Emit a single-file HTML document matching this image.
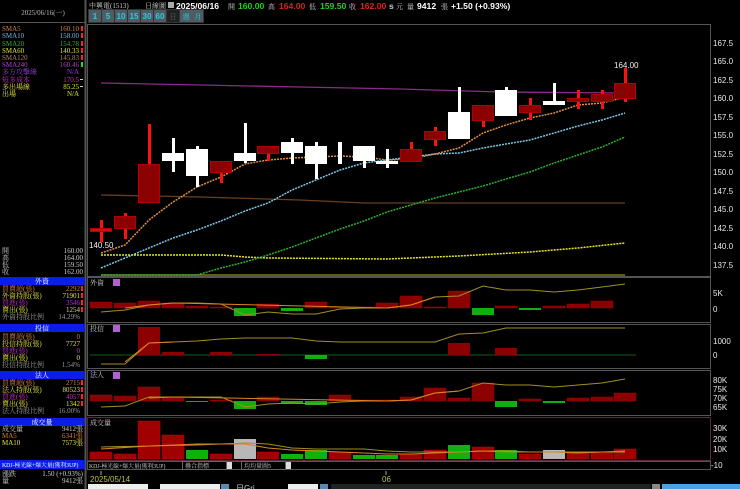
<!DOCTYPE html>
<html><head><meta charset="utf-8">
<style>
html,body{margin:0;padding:0;background:#000;width:740px;height:489px;overflow:hidden}
svg{display:block}
text{font-family:"Liberation Sans","Noto Sans CJK TC",sans-serif;font-size:8px}
.s,.s text{font-family:"Liberation Serif","Noto Serif CJK SC",serif;font-size:7px}
.ax text{fill:#e8e8e8;font-size:8px;font-family:"Liberation Sans",sans-serif}
.h{font-size:8.6px;font-weight:bold}
</style></head><body>
<svg width="740" height="489" viewBox="0 0 740 489" xmlns="http://www.w3.org/2000/svg">
<rect width="740" height="489" fill="#000"/>
<line x1="85.5" y1="0" x2="85.5" y2="489" stroke="#555" stroke-width="2"/>
<line x1="0" y1="22.5" x2="85" y2="22.5" stroke="#555"/>
<text x="43" y="15" fill="#bbb" text-anchor="middle" class="s">2025/06/16(一)</text>
<g class="s">
<text x="2" y="31" fill="#d08040">SMA5</text><text x="79" y="31" fill="#d08040" text-anchor="end">160.10</text>
<text x="2" y="38" fill="#70b8e0">SMA10</text><text x="79" y="38" fill="#70b8e0" text-anchor="end">158.00</text>
<text x="2" y="46" fill="#30b030">SMA20</text><text x="79" y="46" fill="#30b030" text-anchor="end">154.78</text>
<text x="2" y="53" fill="#e0e040">SMA60</text><text x="79" y="53" fill="#e0e040" text-anchor="end">140.33</text>
<text x="2" y="60" fill="#b08060">SMA120</text><text x="79" y="60" fill="#b08060" text-anchor="end">145.83</text>
<text x="2" y="67" fill="#b040c0">SMA240</text><text x="79" y="67" fill="#b040c0" text-anchor="end">160.46</text>
<text x="2" y="74" fill="#9040d0">多方攻擊線</text><text x="79" y="74" fill="#9040d0" text-anchor="end">N/A</text>
<text x="2" y="82" fill="#c030c0">短多成本</text><text x="79" y="82" fill="#c030c0" text-anchor="end">170.5</text>
<text x="2" y="89" fill="#e0e040">多出場線</text><text x="79" y="89" fill="#e0e040" text-anchor="end">85.25</text>
<text x="2" y="96" fill="#e0e040">出場</text><text x="79" y="96" fill="#e0e040" text-anchor="end">N/A</text>
</g>
<g fill="#ff2020"><rect x="81" y="26" width="2" height="5"/><rect x="81" y="33" width="2" height="5"/><rect x="81" y="41" width="2" height="5"/><rect x="81" y="48" width="2" height="5"/><rect x="81" y="55" width="2" height="5"/></g>
<rect x="81" y="62" width="2" height="5" fill="#20e020"/>
<g fill="#ccc"><rect x="80" y="79" width="3" height="1"/><rect x="80" y="86" width="3" height="1"/></g>

<g class="s" fill="#ccc">
<text x="2" y="253">開</text><text x="83" y="253" text-anchor="end">160.00</text>
<text x="2" y="260">高</text><text x="83" y="260" text-anchor="end">164.00</text>
<text x="2" y="267">低</text><text x="83" y="267" text-anchor="end">159.50</text>
<text x="2" y="274">收</text><text x="83" y="274" text-anchor="end">162.00</text>
</g>
<g fill="#0a1ee8"><rect x="0" y="277" width="85" height="8"/><rect x="0" y="324" width="85" height="8"/><rect x="0" y="371" width="85" height="8"/><rect x="0" y="418" width="85" height="8"/><rect x="0" y="460" width="85" height="9"/></g>
<g class="s" fill="#fff" text-anchor="middle"><text x="42" y="283.5">外資</text><text x="42" y="330.5">投信</text><text x="42" y="377.5">法人</text><text x="42" y="424.5">成交量</text></g>
<text x="2" y="467" class="s" fill="#fff" style="font-size:5.8px">KDJ-極光線+爆大量(獲利3UP)</text>
<g class="s">
<text x="2" y="291" fill="#d08040">買賣超(張)</text><text x="80" y="291" fill="#d08040" text-anchor="end">2292</text>
<text x="2" y="298" fill="#e0e040">外資持股(張)</text><text x="80" y="298" fill="#e0e040" text-anchor="end">71901</text>
<text x="2" y="305" fill="#c030c0">買進(張)</text><text x="80" y="305" fill="#c030c0" text-anchor="end">3546</text>
<text x="2" y="312" fill="#e0e040">賣出(張)</text><text x="80" y="312" fill="#e0e040" text-anchor="end">1254</text>
<text x="2" y="319" fill="#999">外資持股比例</text><text x="80" y="319" fill="#999" text-anchor="end">14.29%</text>
<text x="2" y="339" fill="#d08040">買賣超(張)</text><text x="80" y="339" fill="#d08040" text-anchor="end">0</text>
<text x="2" y="346" fill="#e0e040">投信持股(張)</text><text x="80" y="346" fill="#e0e040" text-anchor="end">7727</text>
<text x="2" y="353" fill="#c030c0">買進(張)</text><text x="80" y="353" fill="#c030c0" text-anchor="end">0</text>
<text x="2" y="360" fill="#e0e040">賣出(張)</text><text x="80" y="360" fill="#e0e040" text-anchor="end">0</text>
<text x="2" y="367" fill="#999">投信持股比例</text><text x="80" y="367" fill="#999" text-anchor="end">1.54%</text>
<text x="2" y="385" fill="#d08040">買賣超(張)</text><text x="80" y="385" fill="#d08040" text-anchor="end">2715</text>
<text x="2" y="392" fill="#e0e040">法人持股(張)</text><text x="80" y="392" fill="#e0e040" text-anchor="end">80523</text>
<text x="2" y="399" fill="#c030c0">買進(張)</text><text x="80" y="399" fill="#c030c0" text-anchor="end">4057</text>
<text x="2" y="406" fill="#e0e040">賣出(張)</text><text x="80" y="406" fill="#e0e040" text-anchor="end">1342</text>
<text x="2" y="413" fill="#999">法人持股比例</text><text x="80" y="413" fill="#999" text-anchor="end">16.00%</text>
<text x="2" y="431" fill="#ccc">成交量</text><text x="83" y="431" fill="#ccc" text-anchor="end">9412張</text>
<text x="2" y="438" fill="#d08040">MA5</text><text x="83" y="438" fill="#d08040" text-anchor="end">6341張</text>
<text x="2" y="445" fill="#e0e040">MA10</text><text x="83" y="445" fill="#e0e040" text-anchor="end">7573張</text>
<text x="2" y="476" fill="#ccc">漲跌</text><text x="83" y="476" fill="#ccc" text-anchor="end">1.50 (+0.93%)</text>
<text x="2" y="483" fill="#ccc">量</text><text x="83" y="483" fill="#ccc" text-anchor="end">9412張</text>
</g>
<g fill="#ff2020"><rect x="81" y="286" width="2" height="5"/><rect x="81" y="293" width="2" height="5"/><rect x="81" y="300" width="2" height="5"/><rect x="81" y="307" width="2" height="5"/><rect x="81" y="380" width="2" height="5"/><rect x="81" y="387" width="2" height="5"/><rect x="81" y="394" width="2" height="5"/><rect x="81" y="401" width="2" height="5"/></g>

<text x="89" y="8" class="s" fill="#ccc">中興電(1513)</text>
<text x="145" y="8" class="s" fill="#ccc">日線圖</text>
<rect x="168" y="2" width="6" height="6" fill="#aaa"/>
<text x="176" y="9" fill="#fff" class="h">2025/06/16</text>
<text x="228" y="9" class="s" fill="#ccc">開</text><text x="238" y="9" fill="#20d020" class="h">160.00</text>
<text x="268" y="9" class="s" fill="#ccc">高</text><text x="279" y="9" fill="#e02020" class="h">164.00</text>
<text x="309" y="9" class="s" fill="#ccc">低</text><text x="320" y="9" fill="#20d020" class="h">159.50</text>
<text x="349" y="9" class="s" fill="#ccc">收</text><text x="360" y="9" fill="#e02020" class="h">162.00</text>
<text x="389" y="9" fill="#ccc" class="h">s</text><text x="396" y="9" class="s" fill="#ccc">元</text>
<text x="407" y="9" class="s" fill="#ccc">量</text><text x="417" y="9" fill="#fff" class="h">9412</text><text x="441" y="9" class="s" fill="#ccc">張</text>
<text x="451" y="9" fill="#fff" class="h">+1.50 (+0.93%)</text>

<rect x="88" y="9" width="116" height="14" fill="#333"/>
<g fill="#4e5d63">
<rect x="89" y="10" width="12" height="12"/><rect x="102" y="10" width="12" height="12"/><rect x="115" y="10" width="12" height="12"/><rect x="128" y="10" width="12" height="12"/><rect x="141" y="10" width="12" height="12"/><rect x="154" y="10" width="12" height="12"/><rect x="180" y="10" width="12" height="12"/><rect x="192" y="10" width="11" height="12"/></g>
<rect x="167" y="10" width="12" height="12" fill="#222"/>
<g fill="#30c8e0" font-weight="bold" text-anchor="middle">
<text x="95" y="19">1</text><text x="108" y="19">5</text><text x="121" y="19">10</text><text x="134" y="19">15</text><text x="147" y="19">30</text><text x="160" y="19">60</text></g>
<g class="s" text-anchor="middle"><text x="173" y="19" fill="#666">日</text><text x="186" y="19" fill="#30c8e0">週</text><text x="198" y="19" fill="#30c8e0">月</text></g>

<rect x="87.5" y="24.5" width="623" height="252" fill="none" stroke="#555"/>
<g class="ax">
<text x="713" y="46">167.5</text><text x="713" y="64">165.0</text><text x="713" y="83">162.5</text><text x="713" y="101">160.0</text><text x="713" y="120">157.5</text><text x="713" y="138">155.0</text><text x="713" y="157">152.5</text><text x="713" y="175">150.0</text><text x="713" y="194">147.5</text><text x="713" y="212">145.0</text><text x="713" y="231">142.5</text><text x="713" y="249">140.0</text><text x="713" y="268">137.5</text>
</g>
<g fill="none">
<polyline points="101,83 200,85 300,87 400,89 500,92 625,93" stroke="#8a2a8a" stroke-width="1.3"/>
<polyline points="101,195 200,197 300,200 364,203 625,203" stroke="#6a4020" stroke-width="1.3"/>
<polyline points="101,275 625,275" stroke="#807a20" stroke-width="1.5"/>
<polyline points="101,255 221,255 245,257 268,258 387,259 459,256 530,252 578,248 625,243" stroke="#e8e820" stroke-width="1.5" stroke-dasharray="2,1"/>
<polyline points="101,275 197,275 221,268 245,262 268,255 292,247 316,238 340,229 364,221 387,212 411,205 435,198 459,192 483,186 506,179 530,172 554,163 578,155 602,147 625,137" stroke="#30b030" stroke-width="1.5" stroke-dasharray="2,1"/>
<polyline points="101,268 125,258 149,248 173,238 197,230 221,221 245,211 268,203 292,190 316,180 340,170 364,163 387,160 411,157 435,154 459,153 483,148 506,144 530,140 554,133 578,126 602,120 625,113" stroke="#80c8e8" stroke-width="1.5" stroke-dasharray="2,1"/>
<polyline points="101,253 125,245 149,220 173,202 197,187 221,177 245,164 268,160 292,158 316,157 340,156 364,157 387,160 411,159 435,154 459,148 483,133 506,125 530,118 554,113 578,105 602,103 625,97" stroke="#e09040" stroke-width="1.5" stroke-dasharray="2,1"/>
</g>
<g fill="#ff1010">
<rect x="100" y="220" width="3" height="22"/><rect x="124" y="213" width="3" height="26"/><rect x="148" y="124" width="3" height="78"/><rect x="220" y="161" width="3" height="22"/><rect x="267" y="146" width="3" height="15"/><rect x="410" y="142" width="3" height="19"/><rect x="434" y="127" width="3" height="19"/><rect x="482" y="105" width="3" height="22"/><rect x="529" y="98" width="3" height="22"/><rect x="577" y="90" width="3" height="19"/><rect x="601" y="90" width="3" height="19"/><rect x="624" y="68" width="3" height="34"/>
</g>
<g fill="#8b0000" stroke="#b00000" stroke-width="1">
<rect x="90.5" y="228.5" width="21" height="3" fill="#d01010"/>
<rect x="114.5" y="216.5" width="21" height="12"/>
<rect x="138.5" y="164.5" width="21" height="38"/>
<rect x="210.5" y="161.5" width="21" height="11"/>
<rect x="257.5" y="146.5" width="21" height="7"/>
<rect x="400.5" y="149.5" width="21" height="12"/>
<rect x="424.5" y="131.5" width="21" height="8"/>
<rect x="472.5" y="105.5" width="21" height="15"/>
<rect x="519.5" y="105.5" width="21" height="7"/>
<rect x="567.5" y="98.5" width="21" height="3"/>
<rect x="591.5" y="94.5" width="21" height="7"/>
<rect x="614.5" y="83.5" width="21" height="15"/>
</g>
<g fill="#fff">
<rect x="172" y="138" width="3" height="34"/><rect x="162" y="153" width="22" height="8"/>
<rect x="196" y="146" width="3" height="41"/><rect x="186" y="149" width="22" height="27"/>
<rect x="244" y="123" width="3" height="40"/><rect x="234" y="153" width="22" height="8"/>
<rect x="291" y="138" width="3" height="26"/><rect x="281" y="142" width="22" height="11"/>
<rect x="315" y="142" width="3" height="37"/><rect x="305" y="146" width="22" height="18"/>
<rect x="338" y="142" width="4" height="22"/>
<rect x="363" y="146" width="3" height="22"/><rect x="353" y="146" width="22" height="15"/>
<rect x="386" y="149" width="3" height="19"/><rect x="376" y="161" width="22" height="3"/>
<rect x="458" y="87" width="3" height="52"/><rect x="448" y="112" width="22" height="27"/>
<rect x="505" y="87" width="3" height="29"/><rect x="495" y="90" width="22" height="26"/>
<rect x="553" y="83" width="3" height="22"/><rect x="543" y="101" width="22" height="4"/>
</g>
<text x="614" y="68" fill="#eee">164.00</text>
<text x="89" y="248" fill="#eee">140.50</text>

<g fill="none" stroke="#555">
<rect x="87.5" y="277.5" width="623" height="45"/>
<rect x="87.5" y="324.5" width="623" height="44"/>
<rect x="87.5" y="370.5" width="623" height="45"/>
<rect x="87.5" y="417.5" width="623" height="43" stroke="#5a2a3a"/>
<rect x="87.5" y="461.5" width="623" height="8"/>
</g>
<g class="s" fill="#ccc"><text x="90" y="285">外資</text><text x="90" y="331">投信</text><text x="90" y="377">法人</text><text x="90" y="425">成交量</text></g>
<g fill="#b060d0"><rect x="113" y="279" width="7" height="7"/><rect x="113" y="325" width="7" height="7"/><rect x="113" y="372" width="7" height="7"/></g>
<g class="ax"><text x="713" y="296">5K</text><text x="713" y="312">0</text><text x="713" y="344">1000</text><text x="713" y="358">0</text><text x="713" y="383">80K</text><text x="713" y="392">75K</text><text x="713" y="401">70K</text><text x="713" y="410">65K</text><text x="713" y="431">30K</text><text x="713" y="442">20K</text><text x="713" y="452">10K</text><text x="711" y="468">-10</text></g>

<g fill="#8b0000" stroke="#a00000" stroke-width="0.5">
<rect x="90" y="302" width="22" height="6"/><rect x="114" y="303" width="22" height="5"/><rect x="138" y="301" width="22" height="7"/><rect x="162" y="303" width="22" height="5"/><rect x="186" y="306" width="22" height="2"/><rect x="210" y="307" width="22" height="1"/><rect x="257" y="304" width="22" height="4"/><rect x="305" y="302" width="22" height="6"/><rect x="329" y="307" width="22" height="1"/><rect x="353" y="307" width="22" height="1"/><rect x="376" y="303" width="22" height="5"/><rect x="400" y="296" width="22" height="12"/><rect x="424" y="307" width="22" height="1"/><rect x="448" y="291" width="22" height="17"/><rect x="495" y="306" width="22" height="2"/><rect x="543" y="306" width="22" height="2"/><rect x="567" y="304" width="22" height="4"/><rect x="591" y="301" width="22" height="7"/>
</g>
<g fill="#10b010"><rect x="234" y="308" width="22" height="8"/><rect x="281" y="308" width="22" height="3"/><rect x="472" y="308" width="22" height="7"/><rect x="519" y="308" width="22" height="2"/></g>
<polyline fill="none" stroke="#a09020" stroke-width="1" points="101,312 125,310 149,305 173,303 197,303 221,304 245,315 268,312 292,314 316,314 340,309 364,308 387,308 411,305 435,297 459,296 483,286 506,290 530,290 554,292 578,290 602,287 625,284"/>
<polyline fill="none" stroke="#e08020" stroke-width="1" points="125,308 149,305 173,303 387,308 411,305 435,297"/>

<line x1="90" y1="355" x2="636" y2="355" stroke="#106010"/>
<g fill="#8b0000"><rect x="138" y="327" width="22" height="28"/><rect x="162" y="352" width="22" height="3"/><rect x="210" y="352" width="22" height="3"/><rect x="448" y="343" width="22" height="12"/><rect x="495" y="348" width="22" height="7"/><rect x="257" y="354" width="22" height="1"/></g>
<rect x="305" y="355" width="22" height="4" fill="#10b010"/>
<polyline fill="none" stroke="#a09020" stroke-width="1" points="101,364 125,364 149,343 173,342 197,341 221,339 245,338 268,338 292,338 316,341 340,342 364,342 387,342 411,342 435,342 459,334 483,333 506,328 530,328 554,328 578,328 602,328 625,328"/>
<polyline fill="none" stroke="#e08020" stroke-width="1" points="125,362 149,343 173,342"/>

<g fill="#8b0000" stroke="#a00000" stroke-width="0.5">
<rect x="90" y="395" width="22" height="6"/><rect x="114" y="396" width="22" height="5"/><rect x="138" y="387" width="22" height="14"/><rect x="162" y="397" width="22" height="4"/><rect x="210" y="400" width="22" height="1"/><rect x="257" y="397" width="22" height="4"/><rect x="329" y="395" width="22" height="6"/><rect x="353" y="400" width="22" height="1"/><rect x="376" y="400" width="22" height="1"/><rect x="400" y="397" width="22" height="4"/><rect x="424" y="388" width="22" height="13"/><rect x="448" y="398" width="22" height="3"/><rect x="472" y="383" width="22" height="18"/><rect x="519" y="399" width="22" height="2"/><rect x="567" y="398" width="22" height="3"/><rect x="591" y="397" width="22" height="4"/><rect x="614" y="393" width="22" height="8"/>
</g>
<g fill="#10b010"><rect x="186" y="401" width="22" height="1"/><rect x="234" y="401" width="22" height="8"/><rect x="281" y="401" width="22" height="3"/><rect x="305" y="401" width="22" height="4"/><rect x="495" y="401" width="22" height="6"/><rect x="543" y="401" width="22" height="2"/></g>
<polyline fill="none" stroke="#a09020" stroke-width="1" points="101,407 125,406 149,397 173,397 197,397 221,397 245,407 268,404 292,403 316,404 340,402 364,401 387,401 411,400 435,393 459,391 483,383 506,385 530,385 554,387 578,385 602,383 625,379"/>
<polyline fill="none" stroke="#e08020" stroke-width="1" points="149,398 173,397 387,401 411,400 435,393 459,391"/>

<g fill="#a00000" stroke="#c00000" stroke-width="0.5">
<rect x="90" y="452" width="22" height="7"/><rect x="114" y="454" width="22" height="5"/><rect x="138" y="421" width="22" height="38"/><rect x="162" y="435" width="22" height="24"/><rect x="210" y="454" width="22" height="5"/><rect x="257" y="452" width="22" height="7"/><rect x="329" y="452" width="22" height="7"/><rect x="400" y="454" width="22" height="5"/><rect x="424" y="450" width="22" height="9"/><rect x="472" y="447" width="22" height="12"/><rect x="519" y="454" width="22" height="5"/><rect x="567" y="453" width="22" height="6"/><rect x="591" y="452" width="22" height="7"/><rect x="614" y="449" width="22" height="10"/>
</g>
<g fill="#10b010"><rect x="186" y="450" width="22" height="9"/><rect x="281" y="454" width="22" height="5"/><rect x="305" y="450" width="22" height="9"/><rect x="353" y="455" width="22" height="4"/><rect x="376" y="455" width="22" height="4"/><rect x="448" y="445" width="22" height="14"/><rect x="495" y="450" width="22" height="9"/></g>
<g fill="#b8b8b8"><rect x="234" y="439" width="22" height="20"/><rect x="543" y="450" width="22" height="9"/></g>
<polyline fill="none" stroke="#a09020" stroke-width="1" points="101,447 149,446 197,445 245,443 268,444 292,448 316,449 340,449 364,449 387,451 411,452 435,452 459,452 483,451 506,452 530,452 554,452 578,452 602,452 625,452"/>
<polyline fill="none" stroke="#e08020" stroke-width="1" points="101,449 149,446 173,445 197,444 245,444 268,448 292,450 316,451 340,452 364,453 387,454 411,454 435,453 459,452 483,451 506,451 530,452 554,452 578,453 602,452 625,451"/>

<text x="89" y="468" class="s" fill="#ccc" style="font-size:5.8px">KDJ-極光線+爆大量(獲利3UP)</text>
<rect x="182.5" y="461.5" width="44" height="8" fill="none" stroke="#666"/><text x="185" y="468" class="s" fill="#ccc" style="font-size:6px">疊合指標</text><rect x="227" y="462" width="5" height="7" fill="#ddd"/>
<rect x="241.5" y="461.5" width="44" height="8" fill="none" stroke="#666"/><text x="244" y="468" class="s" fill="#ccc" style="font-size:6px">均均量圖5</text><rect x="286" y="462" width="5" height="7" fill="#ddd"/>
<line x1="101" y1="471" x2="101" y2="475" stroke="#aaa"/><line x1="386" y1="471" x2="386" y2="475" stroke="#aaa"/>
<text x="90" y="482" fill="#c0c040">2025/05/14</text>
<text x="382" y="482" fill="#c0c040">06</text>
<rect x="88" y="484" width="60" height="5" fill="#eee"/><rect x="160" y="484" width="60" height="5" fill="#eee"/><rect x="221" y="484" width="8" height="5" fill="#5a8ab0"/>
<text x="236" y="491" fill="#ccc">日Gri</text>
<rect x="288" y="484" width="30" height="5" fill="#eee"/><rect x="320" y="484" width="8" height="5" fill="#5a8ab0"/>
<rect x="331" y="484" width="320" height="5" fill="#222"/>
<rect x="652" y="484" width="8" height="5" fill="#888"/>
<rect x="662" y="484" width="78" height="5" fill="#4aa0e0"/>
</svg>
</body></html>
